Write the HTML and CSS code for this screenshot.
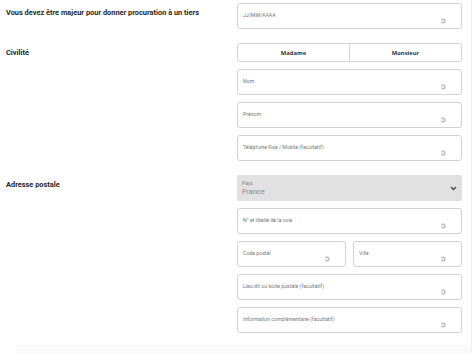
FILE: index.html
```html
<!doctype html>
<html>
<head>
    <title>Procuration</title>
    <link rel="stylesheet" href="styles.css">
</head>

<body>
    <div id="page">
        <!-- date de naissance -->
        <div class="row">
            <div class="label">Vous devez être majeur pour donner procuration à un tiers</div>
            <div class="fields">
                <div class="input"><span class="ph">JJ/MM/AAAA</span><span class="ico"><svg width="5" height="6" viewBox="0 0 5 6"><path d="M0.5 0.5h2.5l1.5 1.5v2.5l-1.5 1h-2.5z" fill="#bdbdbd"/><rect x="1.3" y="2" width="1.6" height="2" fill="#fff"/></svg></span></div>
            </div>
        </div>

        <!-- civilite -->
        <div class="row">
            <div class="label">Civilité</div>
            <div class="fields">
                <div class="toggle">
                    <div class="opt">Madame</div>
                    <div class="opt">Monsieur</div>
                </div>
                <div class="input"><span class="ph">Nom</span><span class="ico"><svg width="5" height="6" viewBox="0 0 5 6"><path d="M0.5 0.5h2.5l1.5 1.5v2.5l-1.5 1h-2.5z" fill="#bdbdbd"/><rect x="1.3" y="2" width="1.6" height="2" fill="#fff"/></svg></span></div>
                <div class="input"><span class="ph">Prénom</span><span class="ico"><svg width="5" height="6" viewBox="0 0 5 6"><path d="M0.5 0.5h2.5l1.5 1.5v2.5l-1.5 1h-2.5z" fill="#bdbdbd"/><rect x="1.3" y="2" width="1.6" height="2" fill="#fff"/></svg></span></div>
                <div class="input"><span class="ph">Téléphone Fixe / Mobile (facultatif)</span><span class="ico"><svg width="5" height="6" viewBox="0 0 5 6"><path d="M0.5 0.5h2.5l1.5 1.5v2.5l-1.5 1h-2.5z" fill="#bdbdbd"/><rect x="1.3" y="2" width="1.6" height="2" fill="#fff"/></svg></span></div>
            </div>
        </div>

        <!-- adresse -->
        <div class="row">
            <div class="label">Adresse postale</div>
            <div class="fields">
                <div class="select">
                    <div>
                        <div class="sel-label">Pays</div>
                        <div class="sel-value">France</div>
                    </div>
                    <svg width="7" height="5" viewBox="0 0 7 5"><path d="M1 1l2.5 2.5L6 1" fill="none" stroke="#444" stroke-width="1.4"/></svg>
                </div>
                <div class="input"><span class="ph">N° et libellé de la voie</span><span class="ico"><svg width="5" height="6" viewBox="0 0 5 6"><path d="M0.5 0.5h2.5l1.5 1.5v2.5l-1.5 1h-2.5z" fill="#bdbdbd"/><rect x="1.3" y="2" width="1.6" height="2" fill="#fff"/></svg></span></div>
                <div class="pair">
                    <div class="input"><span class="ph">Code postal</span><span class="ico"><svg width="5" height="6" viewBox="0 0 5 6"><path d="M0.5 0.5h2.5l1.5 1.5v2.5l-1.5 1h-2.5z" fill="#bdbdbd"/><rect x="1.3" y="2" width="1.6" height="2" fill="#fff"/></svg></span></div>
                    <div class="input"><span class="ph">Ville</span><span class="ico"><svg width="5" height="6" viewBox="0 0 5 6"><path d="M0.5 0.5h2.5l1.5 1.5v2.5l-1.5 1h-2.5z" fill="#bdbdbd"/><rect x="1.3" y="2" width="1.6" height="2" fill="#fff"/></svg></span></div>
                </div>
                <div class="input"><span class="ph">Lieu-dit ou boite postale (facultatif)</span><span class="ico"><svg width="5" height="6" viewBox="0 0 5 6"><path d="M0.5 0.5h2.5l1.5 1.5v2.5l-1.5 1h-2.5z" fill="#bdbdbd"/><rect x="1.3" y="2" width="1.6" height="2" fill="#fff"/></svg></span></div>
                <div class="input"><span class="ph">Information complémentaire (facultatif)</span><span class="ico"><svg width="5" height="6" viewBox="0 0 5 6"><path d="M0.5 0.5h2.5l1.5 1.5v2.5l-1.5 1h-2.5z" fill="#bdbdbd"/><rect x="1.3" y="2" width="1.6" height="2" fill="#fff"/></svg></span></div>
            </div>
        </div>

        <div id="footer"></div>
    </div>
</body>

</html>
```

FILE: styles.css
```css
html, body {
    margin: 0;
    background-color: white;
    font-family: Roboto, "Liberation Sans", sans-serif;
    color: #222;
}

#page {
    width: 472px;
    height: 354px;
    border-right: 1px solid #efefef;
    padding-top: 3px;
    box-sizing: border-box;
    display: flex;
    flex-direction: column;
    gap: 14px;
    position: relative;
}

.row {
    display: flex;
}

.label {
    width: 231px;
    padding-left: 6px;
    padding-top: 5px;
    font-size: 7.4px;
    font-weight: bold;
    color: #262626;
}

.fields {
    width: 225px;
    display: flex;
    flex-direction: column;
    gap: 7px;
}

.input {
    height: 26px;
    border: 1px solid #d2d2d2;
    border-radius: 3px;
    box-sizing: border-box;
    position: relative;
    background-color: white;
}

.ph {
    position: absolute;
    left: 5px;
    top: 8px;
    font-size: 5.2px;
    color: #777;
}

.ico {
    position: absolute;
    right: 15px;
    top: 14px;
    line-height: 0;
}

.toggle {
    height: 19px;
    display: flex;
    border: 1px solid #d2d2d2;
    border-radius: 3px;
    box-sizing: border-box;
}

.opt {
    flex: 1;
    display: flex;
    align-items: center;
    justify-content: center;
    font-family: "Open Sans", sans-serif;
    font-size: 5.8px;
    font-weight: bold;
    color: #333;
}

.opt + .opt {
    border-left: 1px solid #d2d2d2;
}

.select {
    height: 26px;
    background-color: #e1e1e1;
    border-radius: 2px;
    display: flex;
    align-items: center;
    justify-content: space-between;
    padding: 0 5px 0 5px;
    box-sizing: border-box;
}

.sel-label {
    font-size: 5px;
    color: #8a8a8a;
}

.sel-value {
    font-size: 7.6px;
    color: #8a8a8a;
    margin-top: 1px;
}

.pair {
    display: flex;
    gap: 7px;
}

.pair .input {
    flex: 1;
}

#footer {
    position: absolute;
    left: 16px;
    right: 0;
    bottom: 0;
    height: 9px;
    background-color: #fafafa;
}
```
